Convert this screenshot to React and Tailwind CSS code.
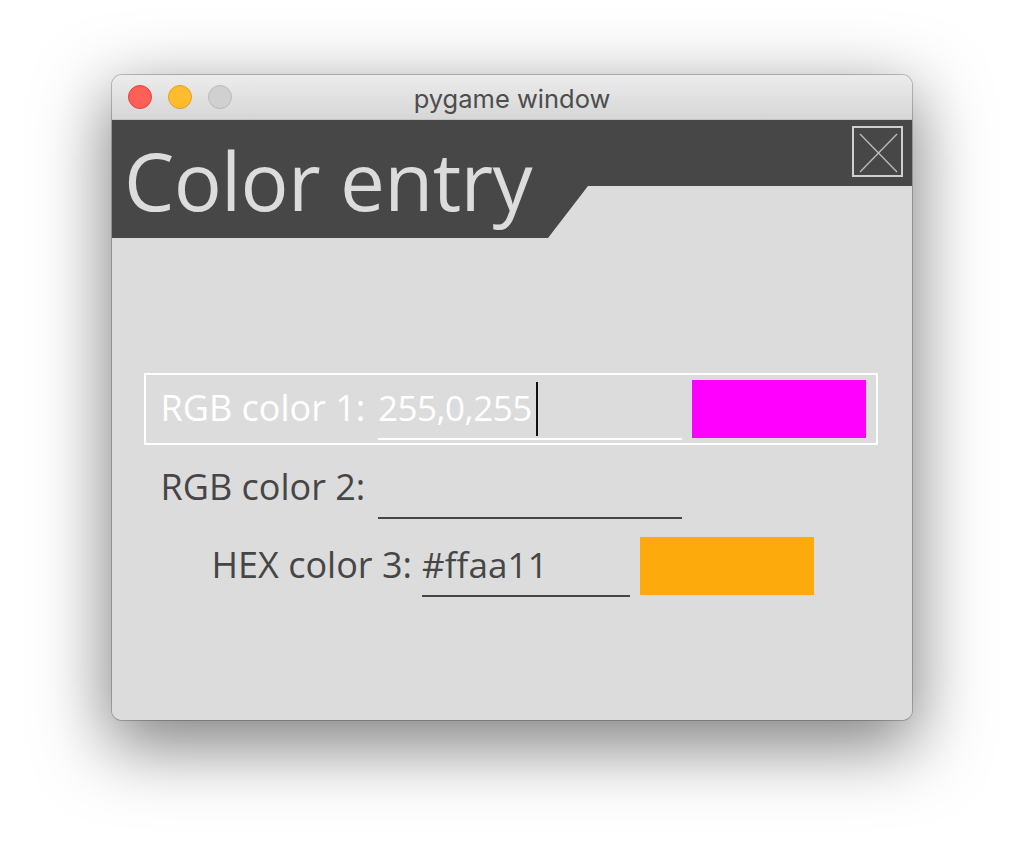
import React from "react";

const OPEN = "font-['Open_Sans',sans-serif]";

function TrafficLights() {
  return (
    <div className="flex items-center gap-[16px] pl-[16px]">
      <span className="block w-[24px] h-[24px] rounded-full bg-[#fe5f57] border border-[#e0443e]" />
      <span className="block w-[24px] h-[24px] rounded-full bg-[#febc2e] border border-[#dea123]" />
      <span className="block w-[24px] h-[24px] rounded-full bg-[#d0d0d0] border border-[#b9b9b9]" />
    </div>
  );
}

function CloseButton() {
  return (
    <svg width="51" height="51" viewBox="0 0 51 51" className="mt-[6px] mr-[9px] shrink-0">
      <rect x="1" y="1" width="49" height="49" fill="none" stroke="#cfcfcf" strokeWidth="2" />
      <line x1="8" y1="8" x2="45" y2="46" stroke="#bdbdbd" strokeWidth="1.3" />
      <line x1="45" y1="8" x2="8" y2="46" stroke="#bdbdbd" strokeWidth="1.3" />
    </svg>
  );
}

function Row({ selected, label, value, valueCls = "", color, outerMl, width, labelW, inputW, showCursor }) {
  const txt = selected ? "text-white" : "text-[#464646]";
  const line = selected ? "border-white" : "border-[#464646]";
  return (
    <div
      className={`flex items-start h-[72px] border-2 pl-[14.5px] pr-[10px] ${selected ? "border-white" : "border-transparent"}`}
      style={{ marginLeft: outerMl, width }}
    >
      <div className={`mt-[15.4px] leading-none text-[36px] whitespace-pre shrink-0 ${txt}`} style={{ width: labelW }}>
        {label}
      </div>
      <div className={`flex items-start h-[65px] border-b-2 shrink-0 ${line}`} style={{ width: inputW }}>
        <span className={`mt-[15px] leading-none text-[35px] whitespace-pre ${valueCls} ${txt}`}>{value}</span>
        {showCursor && <span className="block mt-[7px] ml-[4px] w-[2px] h-[54px] bg-[#111]" />}
      </div>
      {color && <div className="ml-[10px] mt-[5px] h-[58px] w-[174px] shrink-0" style={{ backgroundColor: color }} />}
    </div>
  );
}

export default function App() {
  return (
    <div className="w-[1024px] h-[868px] bg-white pt-[75px] pl-[112px] overflow-hidden">
      <div className="w-[800px] h-[645px] rounded-[10px] overflow-hidden flex flex-col shadow-[0_0_0_1px_rgba(0,0,0,0.22),0_22px_70px_4px_rgba(0,0,0,0.5)]">
        {/* title bar */}
        <div className="h-[45px] shrink-0 grid grid-cols-[1fr_auto_1fr] items-center bg-gradient-to-b from-[#ececec] to-[#d6d6d6] border-b border-[#c3c3c3]">
          <TrafficLights />
          <div className="font-['Inter',sans-serif] text-[25.5px] leading-none text-[#4d4d4d] mt-[4px]">pygame window</div>
          <div />
        </div>
        {/* content */}
        <div className={`flex-1 bg-[#dcdcdc] flex flex-col ${OPEN}`}>
          <div className="h-[118px] shrink-0 bg-[#474747] flex justify-between items-start [clip-path:polygon(0_0,100%_0,100%_66px,476px_66px,436px_118px,0_118px)]">
            <div className="pl-[12px] pt-[20px] text-[80px] leading-none tracking-[-0.7px] text-[#dcdcdc] whitespace-nowrap">Color entry</div>
            <CloseButton />
          </div>
          <div className="flex flex-col gap-[6.5px] mt-[135px]">
            <Row selected label="RGB color 1: " value="255,0,255" valueCls="tracking-[-0.5px]" color="#ff00ff" outerMl="32px" width="734px" labelW="217.5px" inputW="304px" showCursor />
            <Row label="RGB color 2: " value="" outerMl="32px" width="734px" labelW="217.5px" inputW="304px" />
            <Row label="HEX color 3: " value="#ffaa11" valueCls="tracking-[0.1px]" color="#fcaa0c" outerMl="83px" width="631px" labelW="210.5px" inputW="208px" />
          </div>
        </div>
      </div>
    </div>
  );
}
